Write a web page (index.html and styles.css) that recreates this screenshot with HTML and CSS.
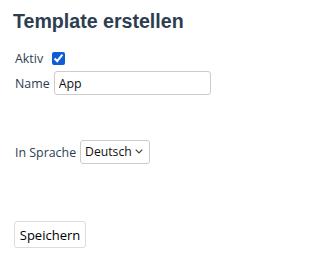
FILE: index.html
```html
<!DOCTYPE html>
<html lang="de">
<head>
<meta charset="utf-8">
<title>Template erstellen</title>
<link rel="stylesheet" href="styles.css">
</head>
<body>
<div class="page">
  <h1 class="title">Template erstellen</h1>
  <form class="form">
    <div class="row row-active">
      <label class="label" for="aktiv">Aktiv</label>
      <input class="check" type="checkbox" id="aktiv" checked>
    </div>
    <div class="row row-name">
      <label class="label" for="name">Name</label>
      <input class="text" type="text" id="name" value="App">
    </div>
    <div class="row row-lang">
      <label class="label" for="lang">In Sprache</label>
      <span class="select-wrap">
        <select class="select" id="lang">
          <option>Deutsch</option>
        </select>
        <svg class="chevron" width="8" height="5" viewBox="0 0 8 5" aria-hidden="true">
          <path d="M0.7 0.7 L4 4 L7.3 0.7" fill="none" stroke="#444" stroke-width="1.2"/>
        </svg>
      </span>
    </div>
    <div class="row row-submit">
      <button class="button" type="button">Speichern</button>
    </div>
  </form>
</div>
</body>
</html>
```

FILE: styles.css
```css
html, body {
  margin: 0;
  padding: 0;
  background: #ffffff;
}

.page {
  padding: 10px 14px 0 13px;
  font-family: "Open Sans", "Noto Sans", sans-serif;
}

.title {
  margin: 0;
  font-family: "Liberation Sans", Arial, sans-serif;
  font-weight: bold;
  font-size: 19.6px;
  line-height: 22px;
  color: #2c3e50;
}

.form {
  display: flex;
  flex-direction: column;
  padding-left: 2px;
}

.row {
  display: flex;
  align-items: center;
  gap: 4px;
}

.label {
  font-size: 12.4px;
  color: #2c3e50;
}

.row-active {
  margin-top: 18px;
  height: 16px;
}

.check {
  margin: 0 0 0 5px;
  width: 13px;
  height: 13px;
  accent-color: #0b5ed7;
}

.row-name {
  margin-top: 5px;
}

.text {
  box-sizing: border-box;
  width: 157px;
  height: 24px;
  margin: 0;
  padding: 0 4px;
  border: 1px solid #cccccc;
  border-radius: 3px;
  font-family: "Open Sans", "Noto Sans", sans-serif;
  font-size: 12.4px;
  color: #111111;
  background: #ffffff;
}

.row-lang {
  margin-top: 45px;
}

.select-wrap {
  position: relative;
  display: inline-flex;
}

.select {
  -webkit-appearance: none;
  appearance: none;
  box-sizing: border-box;
  width: 70px;
  height: 24px;
  margin: 0;
  padding: 0 0 2px 4px;
  border: 1px solid #cccccc;
  border-radius: 3px;
  font-family: "Open Sans", "Noto Sans", sans-serif;
  font-size: 12.2px;
  color: #111111;
  background: #ffffff;
}

.chevron {
  position: absolute;
  right: 7px;
  top: 9px;
  pointer-events: none;
}

.row-submit {
  margin-top: 57px;
  margin-left: -1px;
}

.button {
  box-sizing: border-box;
  width: 72px;
  height: 27px;
  margin: 0;
  padding: 0;
  border: 1px solid #dddddd;
  border-radius: 3px;
  background: #ffffff;
  font-family: "Open Sans", "Noto Sans", sans-serif;
  font-size: 13px;
  color: #000000;
}
```
